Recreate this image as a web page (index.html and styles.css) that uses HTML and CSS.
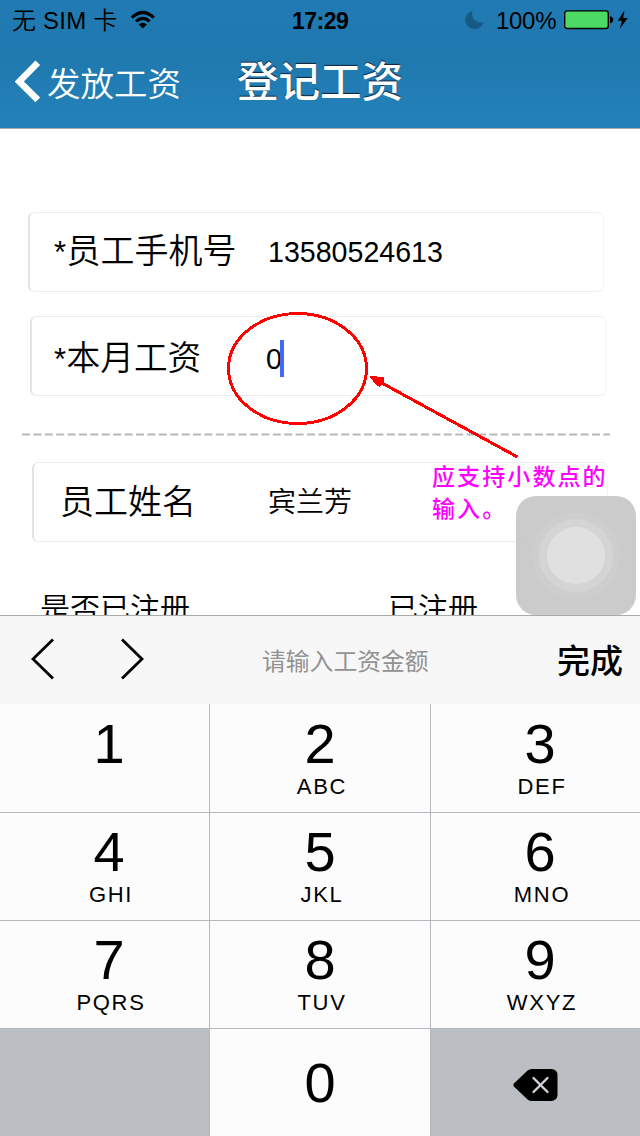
FILE: index.html
```html
<!DOCTYPE html>
<html lang="zh-CN">
<head>
<meta charset="utf-8">
<title>登记工资</title>
<link rel="stylesheet" href="styles.css">
</head>
<body>
<div class="screen">
  <header class="header">
    <div class="status">
      <span class="carrier">无 SIM 卡</span>
      <svg class="wifi" width="26" height="20" viewBox="0 0 26 20"><g fill="none" stroke="#000" stroke-width="3.2"><path d="M1.8 7.6Q12.800-2.600 23.800 7.600"/><path d="M6 11.400Q12.800 5.400 19.600 11.400"/></g><path d="M8.700 14.400Q12.800 11 16.900 14.400L12.800 18.600Z"/></svg>
      <span class="time">17:29</span>
      <svg class="moon" width="20" height="20" viewBox="0 0 20 20"><path d="M7.500.8A9.300 9.300 0 1 0 18.600 12.200A9 9 0 0 1 7.500.8Z" fill="#175a85"/></svg>
      <span class="percent">100%</span>
      <svg class="battery" width="50" height="20" viewBox="0 0 50 20"><rect x=".7" y=".9" width="43.600" height="17.600" rx="2.500" fill="#4cd964" stroke="#000" stroke-width="1.400"/><path d="M46 6.200Q49.200 6.700 49.200 9.700T46 13.200Z"/></svg>
      <svg class="bolt" width="12" height="20" viewBox="0 0 12 20"><path d="M7.400.6L.8 10.700H5L2.600 18.900L10.800 8H6.200Z"/></svg>
    </div>
    <nav class="navbar">
      <svg class="back-icon" width="28" height="44" viewBox="0 0 28 44"><path d="M22.800 2.800L4.300 21.500L22.800 39.800" fill="none" stroke="#fff" stroke-width="6.600"/></svg>
      <span class="back">发放工资</span>
      <h1 class="title">登记工资</h1>
    </nav>
  </header>
  <main class="form">
    <div class="field field-phone"><label class="label"><span class="star">*</span>员工手机号</label><span class="value">13580524613</span></div>
    <div class="field field-pay"><label class="label"><span class="star">*</span>本月工资</label><span class="value">0</span><i class="caret"></i></div>
    <svg class="divider" width="588" height="3" viewBox="0 0 588 3"><path d="M0 1.500H588" stroke="#b8b8b8" stroke-width="2" stroke-dasharray="8 3.400"/></svg>
    <div class="field field-name"><label class="label">员工姓名</label><span class="value cjk">宾兰芳</span></div>
    <div class="registered"><span class="reg-label">是否已注册</span><span>已注册</span></div>
  </main>
  <section class="toolbar">
    <svg class="arrows" width="120" height="44" viewBox="0 0 120 44"><g fill="none" stroke="#000" stroke-width="2.800"><path d="M23 2.500L3 22L23 41.500"/><path d="M92 2.500L112 22L92 41.500"/></g></svg>
    <span class="hint">请输入工资金额</span>
    <span class="done">完成</span>
  </section>
  <section class="keypad">
    <div class="key"><b>1</b></div>
    <div class="key"><b>2</b><small>ABC</small></div>
    <div class="key"><b>3</b><small>DEF</small></div>
    <div class="key"><b>4</b><small>GHI</small></div>
    <div class="key"><b>5</b><small>JKL</small></div>
    <div class="key"><b>6</b><small>MNO</small></div>
    <div class="key"><b>7</b><small>PQRS</small></div>
    <div class="key"><b>8</b><small>TUV</small></div>
    <div class="key"><b>9</b><small>WXYZ</small></div>
    <div class="key blank"></div>
    <div class="key zero"><b>0</b></div>
    <div class="key blank delete"><svg width="46" height="34" viewBox="0 0 46 34"><path d="M1.200 15.200L14.600 2.600Q16.400 1 19 1H38Q44.500 1 44.500 7.500V26.500Q44.500 33 38 33H19Q16.400 33 14.600 31.400L1.200 18.800Q-.400 17 1.200 15.200Z"/><path d="M20.500 10L34.500 24M34.500 10L20.500 24" stroke="#d0d3d7" stroke-width="2.400" stroke-linecap="round"/></svg></div>
  </section>
  <div class="assist"><i class="ring ring-outer"></i><i class="ring ring-mid"></i><i class="ring ring-core"></i></div>
  <svg class="marks" width="640" height="500" viewBox="0 0 640 500" shape-rendering="crispEdges"><ellipse cx="297.500" cy="368.500" rx="69" ry="55" fill="none" stroke="#f00" stroke-width="3"/><path d="M380 382L517.500 457" stroke="#f00" stroke-width="3"/><path d="M369 375.500L384 377.500V382L379.500 387L376 385Z" fill="#f00"/></svg>
  <p class="note">应支持小数点的<br>输入。</p>
</div>
</body>
</html>
```
FILE: styles.css
```css
* { box-sizing: border-box; }
body {
  margin: 0;
  background: #fff;
  color: #000;
  font-family: "Liberation Sans", "Noto Sans CJK SC", sans-serif;
}
svg { display: block; flex: none; }
.screen {
  position: relative;
  display: flex;
  flex-direction: column;
  width: 640px;
  height: 1136px;
  overflow: hidden;
  white-space: nowrap;
}
.header {
  height: 129px;
  flex: none;
  background: linear-gradient(#217ab3, #1f79af 45%, #2482ba);
  border-bottom: 1px solid #a5abb0;
}
.status {
  display: flex;
  align-items: center;
  height: 40px;
  padding: 1px 0 0 12px;
  font-size: 24px;
  line-height: 40px;
}
.carrier { width: 118px; font-weight: 350; letter-spacing: .2px; }
.wifi { margin-top: -1px; }
.time { width: 60px; margin-left: 136px; font-weight: 700; font-size: 23px; letter-spacing: -.5px; }
.moon { margin-left: 113px; margin-top: -1px; }
.percent { width: 68px; margin-left: 11px; letter-spacing: -.3px; }
.battery { margin-top: -1px; }
.bolt { margin-left: 3px; margin-top: -1px; }
.navbar {
  display: flex;
  align-items: center;
  height: 84px;
  padding-left: 15px;
  color: #fff;
}
.back-icon { margin-top: -1px; }
.back { width: 190px; margin: 5px 0 0 4px; font-size: 33.5px; font-weight: 350; line-height: 84px; }
.title { margin: 2px 0 0; font-size: 41.500px; font-weight: 500; line-height: 80px; text-shadow: 0 -1px 1px #123; }
.form { height: 486px; flex: none; overflow: hidden; padding-top: 83px; }
.field {
  display: flex;
  align-items: center;
  width: 576px;
  height: 80px;
  border: 1px solid #ececec;
  border-left: 2px solid #e4e4e4;
  border-right-color: #f6f6f6;
  border-radius: 6px;
}
.label { font-size: 34px; font-weight: 350; line-height: 76px; margin-top: -1px; }
.star { display: inline-block; width: 12.500px; font-size: 31px; }
.value { font-size: 28.600px; line-height: 78px; margin-top: -1px; }
.cjk { font-size: 28px; font-weight: 350; margin-top: 2px; }
.field-phone { margin-left: 28px; padding-left: 24px; }
.field-phone .label { width: 214px; }
.field-pay { margin: 24px 0 0 30px; padding-left: 22px; }
.field-pay .label { width: 212px; margin-top: 6px; font-size: 33.700px; }
.field-pay .value { margin-top: 5px; }
.caret { width: 4px; height: 37px; background: #426af0; margin-left: -2px; margin-top: 5px; }
.divider { margin: 37px 0 26px 22px; }
.field-name { margin-left: 32px; padding-left: 26px; }
.field-name .label { width: 208px; }
.registered { display: flex; padding: 42px 0 0 40px; font-size: 30px; font-weight: 350; line-height: 50px; }
.reg-label { width: 348px; }
.toolbar {
  display: flex;
  align-items: center;
  flex: none;
  height: 89px;
  border-top: 1px solid #aaa;
  background: #f7f7f7;
  padding: 0 0 2px 30px;
}
.hint { width: 296px; margin-left: 112px; font-size: 23.800px; color: #929292; }
.done { margin-left: -1px; font-size: 33px; font-weight: 500; }
.keypad {
  display: grid;
  grid-template-columns: 209px 221px 210px;
  grid-template-rows: repeat(4, 108px);
}
.key {
  display: flex;
  flex-direction: column;
  align-items: center;
  background: #fcfcfc;
  border-left: 1px solid #b4b7bd;
  border-top: 1px solid #b4b7bd;
  padding-top: 9px;
}
.key:nth-child(3n+1) { border-left: 0; padding-left: 9px; }
.key:nth-child(3n) { padding-left: 9px; }
.key:nth-child(-n+3) { border-top: 0; padding-top: 10px; }
.key b { font-size: 56px; font-weight: 400; line-height: 60px; }
.key small { font-size: 22px; letter-spacing: 1.700px; line-height: 25px; padding-left: 4px; }
.key.zero { padding-top: 24px; }
.key.blank { background: #bbbec3; }
.key.delete { padding-top: 39px; padding-left: 1px; }
.assist {
  position: absolute;
  left: 516px;
  top: 496px;
  width: 120px;
  height: 119px;
  border-radius: 20px;
  background: rgba(200, 200, 200, .94);
}
.ring { position: absolute; border-radius: 50%; }
.ring-outer { inset: 16px; background: #cecece; }
.ring-mid { inset: 23px; background: #d4d4d4; }
.ring-core { inset: 31px; background: #e0e0e0; }
.marks { position: absolute; left: 0; top: 0; }
.note {
  position: absolute;
  left: 432px;
  top: 461px;
  margin: 0;
  color: #f0f;
  font-size: 23px;
  font-weight: 500;
  letter-spacing: 2.100px;
  line-height: 32px;
}
```
